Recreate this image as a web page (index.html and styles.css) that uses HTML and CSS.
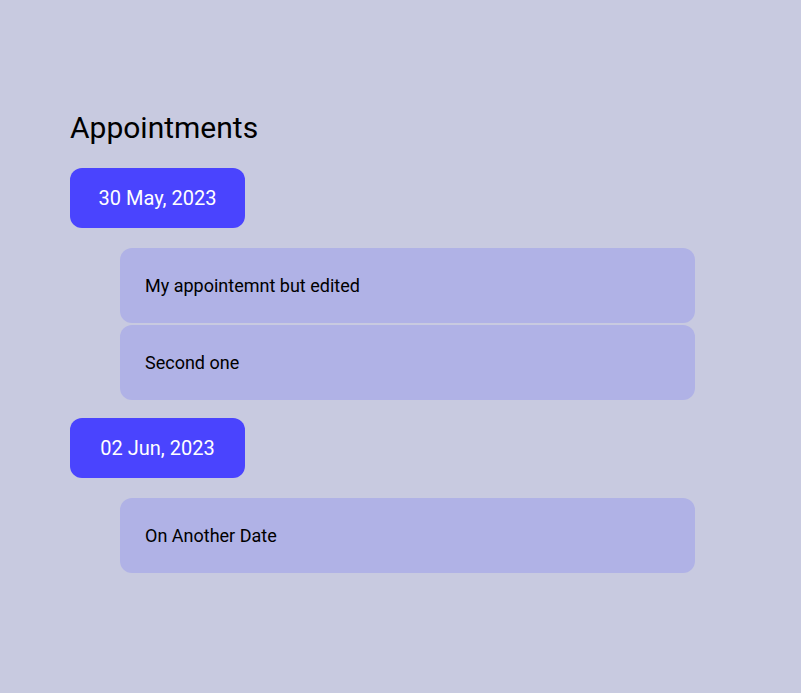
FILE: index.html
```html
<!DOCTYPE html>
<html>
<head>
<meta charset="utf-8">
<link rel="stylesheet" href="styles.css">
</head>
<body>
<main class="page">
  <h1 class="title">Appointments</h1>
  <section class="group">
    <div class="date">30 May, 2023</div>
    <div class="items">
      <div class="item">My appointemnt but edited</div>
      <div class="item">Second one</div>
    </div>
  </section>
  <section class="group">
    <div class="date">02 Jun, 2023</div>
    <div class="items">
      <div class="item">On Another Date</div>
    </div>
  </section>
</main>
</body>
</html>
```
FILE: styles.css
```css
html, body {
  margin: 0;
  padding: 0;
  background: #c8cae0;
  font-family: Roboto, "Liberation Sans", sans-serif;
  color: #000;
}
.page {
  padding: 110px 70px 0 70px;
}
.title {
  margin: 0 0 22px 0;
  font-size: 30px;
  font-weight: 400;
  line-height: 36px;
}
.group {
  display: flex;
  flex-direction: column;
  margin-bottom: 18px;
}
.date {
  width: 175px;
  height: 60px;
  box-sizing: border-box;
  background: #4a44fe;
  color: #fff;
  border-radius: 12px;
  display: flex;
  align-items: center;
  justify-content: center;
  font-size: 20px;
}
.items {
  margin: 20px 0 0 50px;
  display: flex;
  flex-direction: column;
  gap: 2px;
}
.item {
  width: 575px;
  height: 75px;
  box-sizing: border-box;
  background: #b0b2e6;
  border-radius: 12px;
  padding: 0 25px;
  display: flex;
  align-items: center;
  font-size: 18px;
}
```
